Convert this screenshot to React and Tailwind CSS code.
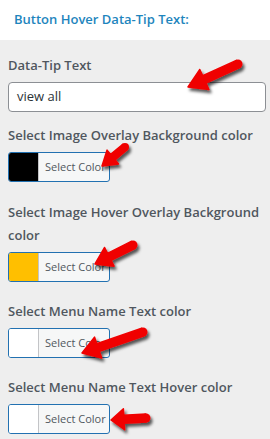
import React from "react";

function arrowPoints(x1, y1, x2, y2, sw, hl, hw) {
  const dx = x2 - x1, dy = y2 - y1;
  const len = Math.hypot(dx, dy);
  const ux = dx / len, uy = dy / len;
  const nx = -uy, ny = ux;
  const neckX = x2 - ux * hl, neckY = y2 - uy * hl;
  const p = (x, y) => `${x.toFixed(1)},${y.toFixed(1)}`;
  return [
    p(x1 + nx * sw / 2, y1 + ny * sw / 2),
    p(neckX + nx * sw / 2, neckY + ny * sw / 2),
    p(neckX + nx * hw / 2, neckY + ny * hw / 2),
    p(x2, y2),
    p(neckX - nx * hw / 2, neckY - ny * hw / 2),
    p(neckX - nx * sw / 2, neckY - ny * sw / 2),
    p(x1 - nx * sw / 2, y1 - ny * sw / 2),
  ].join(" ");
}

const arrows = [
  { x1: 238, y1: 64, x2: 188, y2: 87, sw: 8, hl: 18, hw: 22 },
  { x1: 125, y1: 147, x2: 102, y2: 166, sw: 7, hl: 14, hw: 18 },
  { x1: 133, y1: 245, x2: 95, y2: 264, sw: 8, hl: 16, hw: 21 },
  { x1: 143, y1: 332, x2: 82, y2: 353, sw: 8, hl: 17, hw: 22 },
  { x1: 146, y1: 418, x2: 111, y2: 420, sw: 8, hl: 13, hw: 21 },
];

function Arrows() {
  return (
    <svg className="absolute left-0 top-0 pointer-events-none" width="270" height="439" viewBox="0 0 270 439">
      <defs>
        <filter id="sh" x="-20%" y="-20%" width="150%" height="150%">
          <feDropShadow dx="2" dy="3" stdDeviation="1.6" floodColor="#000" floodOpacity="0.65" />
        </filter>
      </defs>
      {arrows.map((a, i) => (
        <g key={i} filter="url(#sh)">
          <polygon
            points={arrowPoints(a.x1, a.y1, a.x2, a.y2, a.sw, a.hl, a.hw)}
            fill="#f00000"
            stroke="#f00000"
            strokeWidth="1.5"
            strokeLinejoin="round"
          />
          <circle cx={a.x1} cy={a.y1} r={a.sw / 2 + 0.5} fill="#f00000" />
        </g>
      ))}
    </svg>
  );
}

function ColorButton({ color }) {
  return (
    <div className="flex h-[30px] w-[102px] overflow-hidden rounded-[3px] border border-[#2271b1] bg-[#f6f7f7]">
      <div className="h-full w-[30px] shrink-0 border-r border-[#c3c4c7]" style={{ backgroundColor: color }} />
      <div className="flex flex-1 items-center whitespace-nowrap pl-[6px] text-[11px] text-[#50575e]">Select Color</div>
    </div>
  );
}

const label = "block whitespace-nowrap text-[13px] font-semibold leading-[23px] text-[#50575e]";

export default function App() {
  return (
    <div
      className="relative h-[439px] w-[270px] overflow-hidden bg-[#eeeeee]"
      style={{ fontFamily: '"Open Sans", "Noto Sans", sans-serif' }}
    >
      <div className="flex h-[40px] items-center bg-white px-[14px] pb-[1px] text-[13px] font-semibold text-[#1e85bd]">
        Button Hover Data-Tip Text:
      </div>
      <div className="flex flex-col px-[8px] pt-[14px]">
        <span className={label}>Data-Tip Text</span>
        <div className="mt-[5px] flex h-[30px] w-[258px] items-center rounded-[4px] border border-[#8c8f94] bg-white px-[8px] text-[13px] text-[#2c3338]">
          view all
        </div>
        <span className={label + " mt-[12px]"}>Select Image Overlay Background color</span>
        <div className="mt-[5px]">
          <ColorButton color="#000000" />
        </div>
        <span className={label + " mt-[19px]"}>
          Select Image Hover Overlay Background
          <br />
          color
        </span>
        <div className="mt-[5px]">
          <ColorButton color="#ffbf00" />
        </div>
        <span className={label + " mt-[18px]"}>Select Menu Name Text color</span>
        <div className="mt-[5px]">
          <ColorButton color="#ffffff" />
        </div>
        <span className={label + " mt-[18px]"}>Select Menu Name Text Hover color</span>
        <div className="mt-[5px]">
          <ColorButton color="#ffffff" />
        </div>
      </div>
      <Arrows />
    </div>
  );
}
